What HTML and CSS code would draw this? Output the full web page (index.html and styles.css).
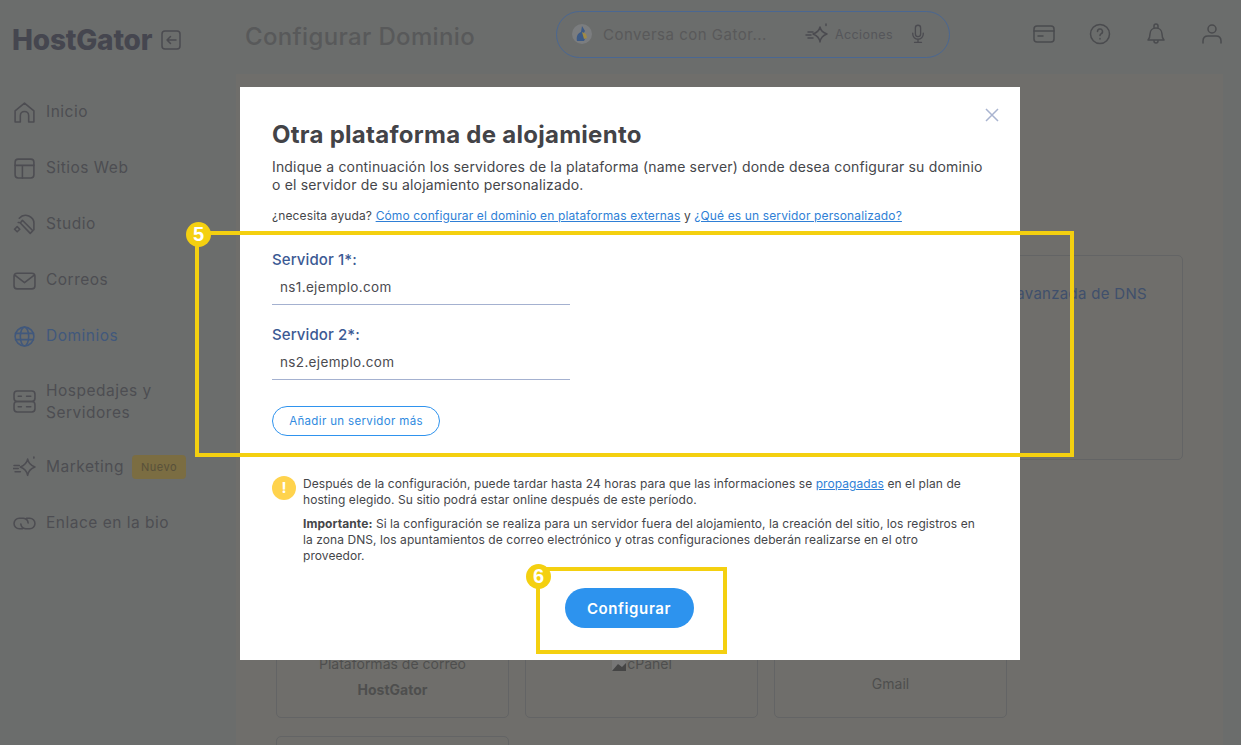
FILE: index.html
```html
<!DOCTYPE html>
<html lang="es">
<head>
    <meta charset="UTF-8">
    <title>Configurar Dominio</title>
    <link rel="stylesheet" href="styles.css">
</head>
<body>
    <div class="page">
        <aside class="sidebar">
            <div class="brand">
                <span class="logo">HostGator</span>
                <svg class="collapse" viewBox="0 0 20 20"><rect x="1" y="1" width="18" height="18" rx="3"/><path d="M15 10H6M9.500 6.500 6 10l3.500 3.500"/></svg>
            </div>
            <nav class="nav">
                <a class="nav-item"><svg viewBox="0 0 22 22"><path d="M2 20V9.500L11 2l9 7.500V20h-5v-6a4 4 0 0 0-8 0v6z"/></svg><span>Inicio</span></a>
                <a class="nav-item"><svg viewBox="0 0 22 22"><rect x="2" y="2" width="18" height="18" rx="3"/><path d="M2 8h18M9 8v12"/></svg><span>Sitios Web</span></a>
                <a class="nav-item"><svg viewBox="0 0 22 22"><path d="M6 5a8 8 0 0 1 14 6v5M9 7l10 10-2.500 2.500L7 9.500zM4 13l2.500 2.500L4 18l-2.500-2.500zM5 9h1"/></svg><span>Studio</span></a>
                <a class="nav-item"><svg viewBox="0 0 22 22"><rect x="1" y="4" width="20" height="15" rx="3"/><path d="m2 6 9 7 9-7"/></svg><span>Correos</span></a>
                <a class="nav-item active"><svg viewBox="0 0 22 22"><circle cx="11" cy="11" r="9"/><ellipse cx="11" cy="11" rx="4" ry="9"/><path d="M2.500 8h17M2.500 14h17"/></svg><span>Dominios</span></a>
                <a class="nav-item double"><svg viewBox="0 0 22 22"><rect x="1" y="1" width="20" height="10" rx="3"/><rect x="1" y="11" width="20" height="10" rx="3"/><path d="M5 6h3M5 16h3M13 6h4M13 16h4"/></svg><span>Hospedajes y Servidores</span></a>
                <a class="nav-item"><svg viewBox="0 0 22 22"><path d="M14 3c.8 4 2.500 6 7 7.500-4.500 1.500-6.200 3.500-7 8-.8-4.500-3-6.500-7-8 4-1.500 6.200-3.500 7-7.500zM20 1v1M1 9h5M0 12h5M2 15h5"/></svg><span>Marketing</span><em class="tag">Nuevo</em></a>
                <a class="nav-item"><svg viewBox="0 0 22 22"><path d="M9 16H6a5 5 0 0 1 0-10h4a5 5 0 0 1 4.500 4.500M13 6h3a5 5 0 0 1 0 10h-4a5 5 0 0 1-4.500-4.500"/></svg><span>Enlace en la bio</span></a>
            </nav>
        </aside>

        <div class="content">
            <header class="topbar">
                <h1 class="page-title">Configurar Dominio</h1>
                <div class="chat">
                    <svg class="gator" viewBox="0 0 20 20"><circle cx="10" cy="10" r="10" fill="#7b7d7f"/><path d="M5 17c-1-5 1-8 4-9l1-6 3 5-2 3 3 3-2 4z" fill="#3c5a86"/><path d="M10 8l4 2 1 4-3 1z" fill="#a08a45"/></svg>
                    <span class="chat-text">Conversa con Gator...</span>
                    <svg class="chat-icon" viewBox="0 0 24 22"><path d="M15 4c.7 3.700 2.300 5.500 7 7-4.700 1.500-6.300 3.500-7 8-.7-4.500-3-6.500-7-8 4-1.500 6.300-3.300 7-7zM21 1v1.500M3 9h5M1 12h5M3 15h5"/></svg>
                    <span class="chat-action">Acciones</span>
                    <svg class="mic" viewBox="0 0 16 22"><rect x="5" y="1" width="6" height="13" rx="3"/><path d="M2 10v1a6 6 0 0 0 12 0v-1M8 17v3M4 20.500h8"/></svg>
                </div>
                <div class="top-icons">
                    <svg viewBox="0 0 22 22"><rect x="1" y="3" width="20" height="16" rx="3"/><path d="M1 8h20M5 13h5"/></svg>
                    <svg viewBox="0 0 22 22"><circle cx="11" cy="11" r="9.500"/><path d="M8.500 8.500a2.500 2.500 0 1 1 3.500 2.300c-.7.400-1 .9-1 1.700M11 15.500v.5"/></svg>
                    <svg viewBox="0 0 22 22"><path d="M3 17c1.500-1.500 2-3 2-6 0-3.500 2.500-6 6-6s6 2.500 6 6c0 3 .5 4.500 2 6zM9 5V3a2 2 0 0 1 4 0v2M9 18a2 2 0 0 0 4 0"/></svg>
                    <svg viewBox="0 0 22 22"><circle cx="11" cy="6" r="4"/><path d="M2 20v-2c0-3 2-5 5-5h8c3 0 5 2 5 5v2"/></svg>
                </div>
            </header>

            <main class="panel">
                <div class="wide-row">
                    <div class="card wide-card">Configuración avanzada de DNS</div>
                </div>
                <div class="card-grid">
                    <div class="card small-card">
                        <p>Plataformas de correo</p>
                        <strong>HostGator</strong>
                    </div>
                    <div class="card small-card cpanel">
                        <p><svg viewBox="0 0 16 16"><path d="M1 1h9l5 5v9H1z" fill="#777"/><path d="M1 15l6-7 4 3 4-4v8z" fill="#454545"/></svg>cPanel</p>
                    </div>
                    <div class="card small-card gmail">
                        <p>Gmail</p>
                    </div>
                    <div class="card small-card"></div>
                </div>
            </main>
        </div>
    </div>

    <section class="modal">
        <svg class="close" viewBox="0 0 14 14"><path d="M1 1l12 12M13 1 1 13"/></svg>
        <h2>Otra plataforma de alojamiento</h2>
        <p class="intro">Indique a continuación los servidores de la plataforma (name server) donde desea configurar su dominio o el servidor de su alojamiento personalizado.</p>
        <p class="help">¿necesita ayuda? <a>Cómo configurar el dominio en plataformas externas</a> y <a>¿Qué es un servidor personalizado?</a></p>

        <div class="field">
            <label>Servidor 1*:</label>
            <div class="input">ns1.ejemplo.com</div>
        </div>
        <div class="field">
            <label>Servidor 2*:</label>
            <div class="input">ns2.ejemplo.com</div>
        </div>
        <button class="btn-outline">Añadir un servidor más</button>

        <div class="notice">
            <span class="notice-icon">!</span>
            <div class="notice-text">
                <p>Después de la configuración, puede tardar hasta 24 horas para que las informaciones se <a>propagadas</a> en el plan de hosting elegido. Su sitio podrá estar online después de este período.</p>
                <p><b>Importante:</b> Si la configuración se realiza para un servidor fuera del alojamiento, la creación del sitio, los registros en la zona DNS, los apuntamientos de correo electrónico y otras configuraciones deberán realizarse en el otro proveedor.</p>
            </div>
        </div>
        <div class="actions">
            <button class="btn-primary">Configurar</button>
        </div>
    </section>

    <div class="mark mark-fields"><span class="mark-num">5</span></div>
    <div class="mark mark-button"><span class="mark-num">6</span></div>
</body>
</html>
```

FILE: styles.css
```css
* {
    box-sizing: border-box;
}
html, body {
    height: 745px;
    overflow: hidden;
}
body {
    margin: 0;
    background: #6b6d6c;
    font-family: Inter, 'Noto Sans', sans-serif;
    color: #4b4b50;
}
svg {
    fill: none;
    stroke: currentColor;
    stroke-width: 1.5;
    stroke-linecap: round;
    stroke-linejoin: round;
}
.page {
    display: flex;
    height: 745px;
}

/* sidebar */
.sidebar {
    width: 236px;
    flex: none;
    padding: 26px 0 0 12px;
}
.brand {
    display: flex;
    align-items: center;
    gap: 9px;
    height: 27px;
}
.logo {
    font-size: 28px;
    font-weight: 800;
    letter-spacing: -0.2px;
    color: #45464f;
}
.collapse {
    width: 20px;
    height: 20px;
}
.nav {
    display: flex;
    flex-direction: column;
    margin-top: 31px;
}
.nav-item {
    display: flex;
    align-items: center;
    gap: 10px;
    height: 56px;
    padding-left: 1px;
    font-size: 15.500px;
    font-weight: 400;
    letter-spacing: 0.5px;
    line-height: 22px;
    color: #4d4d52;
}
.nav-item svg {
    width: 23px;
    height: 23px;
    flex: none;
}
.nav-item.active {
    color: #41587c;
}
.nav-item.double {
    height: 75px;
}
.nav-item.double span {
    width: 130px;
}
.tag {
    font-style: normal;
    font-size: 11px;
    letter-spacing: 0.5px;
    color: #57503a;
    background: #7b6d42;
    border-radius: 4px;
    padding: 0 9px;
    height: 24px;
    line-height: 24px;
    margin-left: -2px;
}

/* top bar */
.content {
    flex: 1;
    min-width: 0;
}
.topbar {
    display: flex;
    align-items: center;
    height: 74px;
    padding: 0 18px 6px 9px;
}
.page-title {
    margin: 5px 0 0;
    width: 311px;
    font-size: 24px;
    font-weight: 500;
    letter-spacing: 0.35px;
    color: #58595a;
}
.chat {
    display: flex;
    align-items: center;
    width: 394px;
    height: 47px;
    border: 1px solid #4a6792;
    border-radius: 24px;
    padding: 0 24px 0 15px;
}
.gator {
    width: 20px;
    height: 20px;
    stroke: none;
    flex: none;
}
.chat-text {
    margin-left: 11px;
    width: 202px;
    font-size: 15px;
    letter-spacing: 0.5px;
    color: #59595a;
}
.chat-icon {
    width: 24px;
    height: 22px;
    flex: none;
}
.chat-action {
    margin-left: 6px;
    font-size: 12.500px;
    letter-spacing: 0.4px;
    color: #55565a;
}
.mic {
    width: 14px;
    height: 20px;
    margin-left: auto;
}
.top-icons {
    display: flex;
    gap: 34px;
    margin-left: auto;
    color: #4a4b4e;
}
.top-icons svg {
    width: 22px;
    height: 22px;
}

/* page behind the modal */
.panel {
    height: 671px;
    overflow: hidden;
    background: #6f6e6b;
    margin-right: 18px;
    padding: 181px 40px 0;
}
.wide-row {
    display: flex;
    justify-content: flex-end;
}
.card {
    border: 1px solid #636465;
    border-radius: 5px;
}
.wide-card {
    width: 366px;
    height: 205px;
    padding: 28px 35px 0 0;
    text-align: right;
    font-size: 15px;
    font-weight: 400;
    letter-spacing: 0.3px;
    color: #40506c;
}
.card-grid {
    display: grid;
    grid-template-columns: repeat(3, 233px);
    gap: 18px 16px;
    margin-top: 76px;
}
.small-card {
    height: 182px;
    padding-top: 117px;
    text-align: center;
    font-size: 14px;
    color: #4e4e4e;
}
.small-card p {
    margin: 0;
    line-height: 20px;
}
.small-card strong {
    display: block;
    margin-top: 7px;
}
.small-card svg {
    width: 16px;
    height: 16px;
    stroke: none;
    vertical-align: -3px;
}
.gmail {
    padding-top: 137px;
}

/* modal */
.modal {
    position: absolute;
    left: 240px;
    top: 87px;
    width: 780px;
    height: 573px;
    background: #fff;
    padding: 33px 32px 0;
    color: #45464a;
}
.close {
    position: absolute;
    right: 21px;
    top: 21px;
    width: 14px;
    height: 14px;
    color: #a9b4d0;
    stroke-linecap: butt;
}
.modal h2 {
    margin: 0;
    font-size: 24px;
    font-weight: 700;
    letter-spacing: 0.27px;
    line-height: 30px;
    color: #434347;
}
.intro {
    margin: 8px 0 0;
    font-size: 14px;
    letter-spacing: 0.17px;
    line-height: 18px;
}
.help {
    margin: 14px 0 0;
    font-size: 12px;
    letter-spacing: 0.13px;
    line-height: 16px;
}
.modal a {
    color: #2f7fd6;
    text-decoration: underline;
}
.field {
    margin-top: 26px;
    width: 298px;
}
.field + .field {
    margin-top: 20px;
}
.field label {
    display: block;
    font-size: 15px;
    font-weight: 500;
    letter-spacing: 0.1px;
    line-height: 20px;
    color: #3c5a94;
}
.input {
    height: 35px;
    padding: 7px 8px 0;
    border-bottom: 1px solid #a4b1d0;
    font-size: 13.500px;
    letter-spacing: 0.35px;
    line-height: 20px;
    color: #4b4b50;
}
.btn-outline {
    display: block;
    margin-top: 26px;
    width: 168px;
    height: 30px;
    background: #fff;
    border: 1px solid #2f93ee;
    border-radius: 15px;
    font: 400 11.500px Inter, sans-serif;
    letter-spacing: 0.35px;
    color: #2f8ae0;
}
.notice {
    display: flex;
    gap: 7px;
    margin-top: 40px;
    font-size: 12px;
    letter-spacing: 0.07px;
    line-height: 16px;
}
.notice-text {
    width: 680px;
}
.notice p {
    margin: 0 0 8px;
}
.notice-icon {
    flex: none;
    width: 24px;
    height: 24px;
    border-radius: 50%;
    background: #ffd34d;
    color: #fff;
    font-weight: 700;
    font-size: 15px;
    line-height: 24px;
    text-align: center;
}
.actions {
    display: flex;
    justify-content: center;
    margin-top: 16px;
    padding-right: 2px;
}
.btn-primary {
    width: 129px;
    height: 40px;
    border: 0;
    border-radius: 20px;
    background: #2d93ee;
    color: #fff;
    font: 600 15px Inter, sans-serif;
    letter-spacing: 0.6px;
}

/* tutorial marks painted over the screenshot */
.mark {
    position: absolute;
    border: 4px solid #f4d010;
}
.mark-fields {
    left: 195px;
    top: 231px;
    width: 879px;
    height: 226px;
}
.mark-button {
    left: 536px;
    top: 567px;
    width: 191px;
    height: 87px;
}
.mark-num {
    position: absolute;
    left: -13px;
    top: -13px;
    width: 25px;
    height: 25px;
    border-radius: 50%;
    background: #f4d010;
    color: #fff;
    font: 700 20px/25px 'Liberation Sans', sans-serif;
    text-align: center;
}
.mark-button .mark-num {
    left: -14px;
    top: -7px;
}
```
